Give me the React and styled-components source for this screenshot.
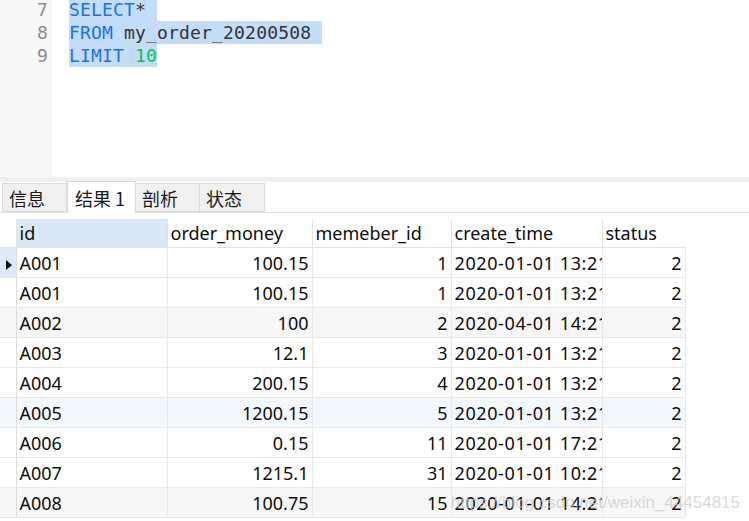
import React from "react";
import styled, { createGlobalStyle } from "styled-components";

const GlobalStyle = createGlobalStyle`
  html, body {
    margin: 0;
    padding: 0;
    background: #ffffff;
    overflow: hidden;
  }
`;

const Page = styled.div`
  position: relative;
  width: 749px;
  height: 521px;
  overflow: hidden;
  background: #ffffff;
`;

const Editor = styled.div`
  display: flex;
  height: 177px;
  overflow: hidden;
`;

const Gutter = styled.div`
  width: 52px;
  flex-shrink: 0;
  background: #f7f7f7;
`;

const CodeArea = styled.div`
  flex: 1;
  padding-left: 17px;
`;

// editor is scrolled a little, first visible line is cut off
const Lines = styled.div`
  margin-top: -2px;
  font-family: "DejaVu Sans Mono", "Liberation Mono", monospace;
  font-size: 18px;
  letter-spacing: 0.17px;
  line-height: 23px;
`;

const LineNo = styled.div`
  height: 23px;
  padding-right: 4px;
  text-align: right;
  color: #8c8c8c;
`;

const Line = styled.div`
  height: 23px;
  white-space: pre;
`;

const Selected = styled.span`
  display: inline-block;
  height: 23px;
  background: #c3dcf8;
`;

const Kw = styled.span`
  color: #1672f0;
`;
const Ident = styled.span`
  color: #333333;
`;
const Num = styled.span`
  color: #08c35a;
`;

const Divider = styled.div`
  height: 5px;
  background: #f0f0f0;
`;

const TabBar = styled.div`
  display: flex;
  align-items: flex-end;
  height: 30px;
  padding-left: 2px;
  border-bottom: 1px solid #e3e3e3;
  font-family: "Noto Sans CJK SC", "Noto Sans", sans-serif;
  font-size: 18px;
`;

const Tab = styled.div`
  box-sizing: border-box;
  width: ${(p) => p.w}px;
  height: ${(p) => (p.active ? 32 : 29)}px;
  margin-bottom: ${(p) => (p.active ? -1 : 0)}px;
  padding-left: ${(p) => (p.active ? 7 : 6)}px;
  display: flex;
  align-items: center;
  white-space: pre;
  background: ${(p) => (p.active ? "#ffffff" : "#f0f0f0")};
  border: 1px solid #dadada;
  border-bottom: ${(p) => (p.active ? "none" : "1px solid #dadada")};
  border-left: ${(p) => (p.first || p.active ? "1px solid #dadada" : "none")};
  color: #1a1a1a;
`;

const GridWrap = styled.div`
  padding-top: 6px;
`;

const Grid = styled.table`
  border-collapse: collapse;
  table-layout: fixed;
  width: 685px;
  font-family: "Noto Sans", "Open Sans", sans-serif;
  font-size: 18px;
  color: #0d0d0d;
`;

const HeadCell = styled.th`
  height: 28px;
  padding: 0 3px;
  text-align: left;
  font-weight: normal;
  white-space: nowrap;
  overflow: hidden;
  background: ${(p) => (p.sel ? "#d9e9f8" : "#ffffff")};
  border-left: 1px solid #e2e2e2;
  border-bottom: 1px solid #e2e2e2;
  &:first-child {
    border-left: none;
  }
`;

const Row = styled.tr`
  background: ${(p) =>
    p.tone === "hover" ? "#f3f8fd" : p.tone === "alt" ? "#f7f7f7" : "#ffffff"};
`;

const Cell = styled.td`
  height: 29px;
  padding: 0 3px;
  white-space: nowrap;
  overflow: hidden;
  text-overflow: clip;
  text-align: ${(p) => (p.right ? "right" : "left")};
  letter-spacing: ${(p) => (p.wide ? "0.6px" : "normal")};
  border: 1px solid #e8e8e8;
  border-top: none;
`;

const Indicator = styled.td`
  height: 29px;
  padding: 0;
  border-bottom: 1px solid #e8e8e8;
  border-right: 1px solid #dcdcdc;
  background: ${(p) => (p.current ? "#dde9f6" : "transparent")};
  text-align: center;
`;

const Arrow = styled.span`
  display: inline-block;
  width: 0;
  height: 0;
  margin-left: 2px;
  border-top: 5px solid transparent;
  border-bottom: 5px solid transparent;
  border-left: 6px solid #111111;
  vertical-align: middle;
`;

const Watermark = styled.div`
  position: absolute;
  right: 9px;
  bottom: 8px;
  font-family: "Liberation Sans", Arial, sans-serif;
  font-size: 17px;
  color: rgba(200, 200, 200, 0.7);
  pointer-events: none;
`;

const rows = [
  ["A001", "100.15", "1", "2020-01-01 13:21:05", "2"],
  ["A001", "100.15", "1", "2020-01-01 13:21:05", "2"],
  ["A002", "100", "2", "2020-04-01 14:21:05", "2"],
  ["A003", "12.1", "3", "2020-01-01 13:21:05", "2"],
  ["A004", "200.15", "4", "2020-01-01 13:21:05", "2"],
  ["A005", "1200.15", "5", "2020-01-01 13:21:05", "2"],
  ["A006", "0.15", "11", "2020-01-01 17:21:05", "2"],
  ["A007", "1215.1", "31", "2020-01-01 10:21:05", "2"],
  ["A008", "100.75", "15", "2020-01-01 14:21:05", "2"],
];

const tones = ["", "", "alt", "", "", "hover", "", "", "alt"];

const tabs = [
  { label: "信息", w: 65 },
  { label: "结果 1", w: 69, active: true },
  { label: "剖析", w: 64 },
  { label: "状态", w: 65 },
];

const App = () => {
  return (
    <Page>
      <GlobalStyle />
      <Editor>
        <Gutter>
          <Lines>
            <LineNo>7</LineNo>
            <LineNo>8</LineNo>
            <LineNo>9</LineNo>
          </Lines>
        </Gutter>
        <CodeArea>
          <Lines>
            <Line>
              <Selected>
                <Kw>SELECT</Kw>
                <Ident>*</Ident>{" "}
              </Selected>
            </Line>
            <Line>
              <Selected>
                <Kw>FROM</Kw> <Ident>my_order_20200508</Ident>{" "}
              </Selected>
            </Line>
            <Line>
              <Selected>
                <Kw>LIMIT</Kw> <Num>10</Num>
              </Selected>
            </Line>
          </Lines>
        </CodeArea>
      </Editor>
      <Divider />
      <TabBar>
        {tabs.map((t, i) => (
          <Tab key={t.label} w={t.w} active={t.active} first={i === 0}>
            {t.label}
          </Tab>
        ))}
      </TabBar>
      <GridWrap>
        <Grid>
          <colgroup>
            <col style={{ width: 16 }} />
            <col style={{ width: 151 }} />
            <col style={{ width: 145 }} />
            <col style={{ width: 139 }} />
            <col style={{ width: 151 }} />
            <col style={{ width: 83 }} />
          </colgroup>
          <thead>
            <tr>
              <HeadCell />
              <HeadCell sel>id</HeadCell>
              <HeadCell>order_money</HeadCell>
              <HeadCell>memeber_id</HeadCell>
              <HeadCell>create_time</HeadCell>
              <HeadCell>status</HeadCell>
            </tr>
          </thead>
          <tbody>
            {rows.map((r, i) => (
              <Row key={i} tone={tones[i]}>
                <Indicator current={i === 0}>{i === 0 && <Arrow />}</Indicator>
                <Cell>{r[0]}</Cell>
                <Cell right>{r[1]}</Cell>
                <Cell right>{r[2]}</Cell>
                <Cell wide>{r[3]}</Cell>
                <Cell right>{r[4]}</Cell>
              </Row>
            ))}
          </tbody>
        </Grid>
      </GridWrap>
      <Watermark>https://blog.csdn.net/weixin_44454815</Watermark>
    </Page>
  );
};

export default App;
